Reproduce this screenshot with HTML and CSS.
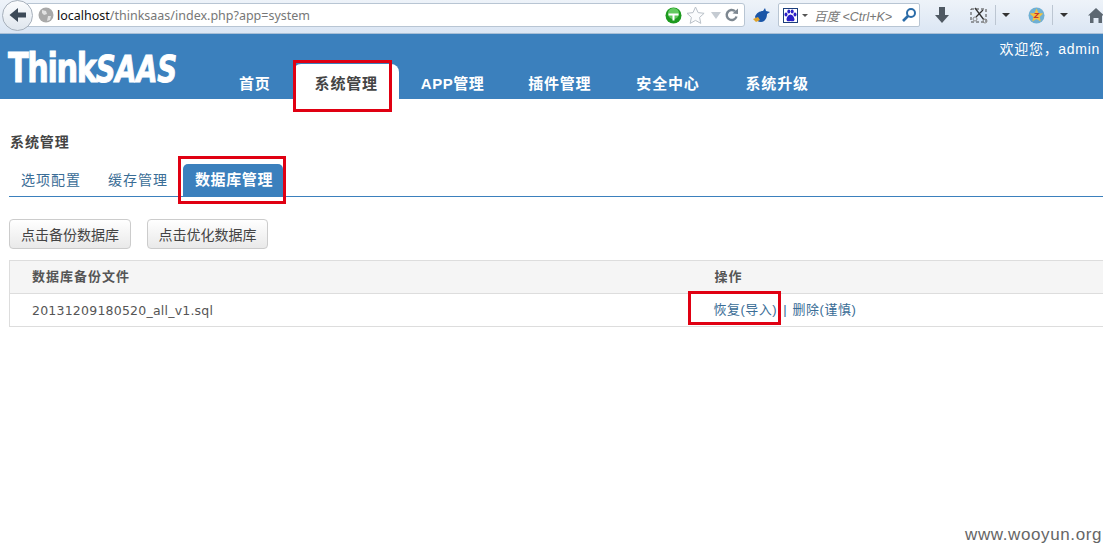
FILE: index.html
```html
<!DOCTYPE html>
<html lang="zh-CN">
<head>
<meta charset="utf-8">
<title>系统管理</title>
<link rel="stylesheet" href="styles.css">
</head>
<body>
<div class="toolbar">
  <div class="back">
    <svg width="22" height="22" viewBox="0 0 22 22"><path d="M19 8.500H11V4L2.500 11l8.500 7v-4.500h8z" fill="#3d4a58"/></svg>
  </div>
  <div class="urlbar">
    <svg class="globe" width="16" height="16" viewBox="0 0 16 16"><circle cx="8" cy="8" r="7.500" fill="#a9a9a9"/><path d="M4 3l4 1 1 3-3 1-2-2zM10 9l3 0-1 4-3 1z" fill="#e2e2e2"/></svg>
    <span class="url"><span class="host">localhost</span>/thinksaas/index.php?app=system</span>
    <svg class="go" width="17" height="17" viewBox="0 0 17 17"><circle cx="8.500" cy="8.500" r="8" fill="#1d9a1f"/><circle cx="8.500" cy="6.500" r="5.500" fill="#62c95e"/><path d="M3.500 6.500h10v2h-4v5h-2v-5h-4z" fill="#fff"/></svg>
    <svg class="star" width="19" height="18" viewBox="0 0 19 18"><path d="M9.500 1l2.600 5.600 6 .7-4.500 4.100 1.200 6-5.300-3-5.300 3 1.200-6L1 7.300l6-.7z" fill="#fbfcfd" stroke="#b9c0c8"/></svg>
    <span class="drop"></span>
    <svg class="reload" width="14" height="14" viewBox="0 0 14 14"><path d="M11.500 8.500A5 5 0 1 1 10 3.200" fill="none" stroke="#7d8790" stroke-width="2.400"/><path d="M7.500 5.500L13 6V0.500z" fill="#7d8790"/></svg>
  </div>
  <svg class="bird" width="18" height="16" viewBox="0 0 18 16"><path d="M2 10c1-4 5-6 8-6l2-3 1 3 4 1-3 2c0 4-2 8-6 8-3 0-5-2-6-5z" fill="#1a56a8"/><path d="M0 12l5-2 2 3-4 2z" fill="#e0a32a"/></svg>
  <div class="search">
    <span class="paw">
      <svg width="13" height="13" viewBox="0 0 13 13"><g fill="#2a1fc8"><ellipse cx="2" cy="5.500" rx="1.500" ry="2"/><ellipse cx="4.800" cy="2.500" rx="1.500" ry="2"/><ellipse cx="8.200" cy="2.500" rx="1.500" ry="2"/><ellipse cx="11" cy="5.500" rx="1.500" ry="2"/><path d="M6.500 5.500c2 0 4 3 4 5s-2 2-4 1.500c-2 .5-4 .5-4-1.500s2-5 4-5z"/></g></svg>
    </span>
    <span class="mini-drop"></span>
    <span class="hint">百度 &lt;Ctrl+K&gt;</span>
    <svg class="lens" width="16" height="16" viewBox="0 0 16 16"><circle cx="10" cy="6" r="4" fill="none" stroke="#2b6ca8" stroke-width="2"/><path d="M7 9l-5 5" stroke="#2b6ca8" stroke-width="2.600"/></svg>
  </div>
  <svg class="download" width="14" height="16" viewBox="0 0 14 16"><path d="M4 0h6v8h4l-7 8-7-8h4z" fill="#4f5963"/></svg>
  <svg class="scissors" width="19" height="17" viewBox="0 0 19 17"><path d="M1 2h15v13H1z" fill="none" stroke="#444" stroke-dasharray="3 2"/><path d="M5 1l9 12M13 3l-7 7" stroke="#333" stroke-width="1.300"/><circle cx="15" cy="14" r="2" fill="none" stroke="#8a8a8a"/><circle cx="5" cy="12" r="2" fill="none" stroke="#8a8a8a"/></svg>
  <span class="sep sep-a"></span>
  <span class="drop-dark da"></span>
  <svg class="medal" width="17" height="17" viewBox="0 0 17 17"><circle cx="8.500" cy="8.500" r="8" fill="#6fb0d4"/><path d="M8.500 1.500l2 4.500 4.800.5-3.600 3.200 1 4.800-4.200-2.500-4.200 2.500 1-4.800L1.700 6.500 6.500 6z" fill="#f2c23f"/><path d="M6.500 6.500h4l-4 4h4" fill="none" stroke="#c8382c" stroke-width="1.100"/></svg>
  <span class="sep sep-b"></span>
  <span class="drop-dark db"></span>
  <svg class="home" width="16" height="15" viewBox="0 0 16 15"><path d="M8 0l8 7.500h-2V15h-3.500v-5h-5v5H2V7.500H0z" fill="#5d6872"/></svg>
</div>

<header class="site-header">
  <div class="logo"><div class="logo-inner"><span class="logo-think">Think</span><span class="logo-saas">SAAS</span></div></div>
  <nav class="nav">
    <a class="nav-item">首页</a>
    <a class="nav-item nav-active">系统管理</a>
    <a class="nav-item nav-app">APP管理</a>
    <a class="nav-item nav-plugin">插件管理</a>
    <a class="nav-item nav-safe">安全中心</a>
    <a class="nav-item">系统升级</a>
  </nav>
  <div class="welcome">欢迎您，admin</div>
</header>

<main class="content">
  <h1 class="title">系统管理</h1>
  <ul class="tabs">
    <li class="tab">选项配置</li>
    <li class="tab">缓存管理</li>
    <li class="tab tab-active">数据库管理</li>
  </ul>
  <div class="actions">
    <button class="btn">点击备份数据库</button>
    <button class="btn">点击优化数据库</button>
  </div>
  <table class="data">
    <tr class="head">
      <th class="col-file"><span class="cell-up">数据库备份文件</span></th>
      <th><span class="cell-up">操作</span></th>
    </tr>
    <tr>
      <td class="col-file">20131209180520_all_v1.sql</td>
      <td><span class="cell-up cell-links"><a class="link">恢复(导入)</a><span class="pipe">|</span><a class="link">删除(谨慎)</a></span></td>
    </tr>
  </table>
</main>

<div class="mark mark-nav"></div>
<div class="mark mark-tab"></div>
<div class="mark mark-restore"></div>
<div class="watermark">www.wooyun.org</div>
</body>
</html>
```
FILE: styles.css
```css
* { box-sizing: border-box; }
html, body { margin: 0; padding: 0; }
body {
  position: relative;
  width: 1103px;
  height: 544px;
  overflow: hidden;
  background: #fff;
  color: #333;
  font-family: "Liberation Sans", "Noto Sans CJK SC", sans-serif;
}

.toolbar {
  display: flex;
  align-items: center;
  height: 34px;
  padding: 0 0 3px 2px;
  background: linear-gradient(#eef3f9, #dbe6f4);
  border-bottom: 1px solid #a9bfd6;
}
.back {
  display: flex;
  align-items: center;
  justify-content: center;
  width: 31px;
  height: 31px;
  flex: none;
  position: relative;
  z-index: 1;
  border: 1px solid #a7b0bb;
  border-radius: 50%;
  background: linear-gradient(#fbfcfd, #dfe6ee);
}
.urlbar {
  display: flex;
  align-items: center;
  width: 718px;
  height: 24px;
  margin-left: -6px;
  padding-left: 11px;
  flex: none;
  background: #fff;
  border: 1px solid #b8c5d3;
  border-radius: 0 3px 3px 0;
}
.globe { flex: none; margin-left: -1px; }
.url {
  margin-left: 3px;
  width: 609px;
  font-family: "Noto Sans", sans-serif;
  font-size: 12.500px;
  color: #777;
  white-space: nowrap;
}
.host { color: #111; }
.go { flex: none; margin-left: -1px; }
.star { flex: none; margin-left: 4px; }
.drop {
  margin-left: 6px;
  border-left: 5px solid transparent;
  border-right: 5px solid transparent;
  border-top: 7px solid #c5cbd2;
}
.reload { margin-left: 4px; flex: none; }
.bird { margin-left: 8px; flex: none; }
.search {
  display: flex;
  align-items: center;
  width: 142px;
  height: 24px;
  margin-left: 7px;
  padding-left: 4px;
  flex: none;
  background: #fff;
  border: 1px solid #b8c5d3;
  border-radius: 2px;
}
.paw {
  display: flex;
  align-items: center;
  justify-content: center;
  width: 15px;
  height: 15px;
  border: 1px solid #1c3f7c;
}
.mini-drop {
  margin-left: 4px;
  border-left: 3px solid transparent;
  border-right: 3px solid transparent;
  border-top: 3px solid #555;
}
.hint {
  width: 87px;
  margin-left: 6px;
  font-size: 12.500px;
  font-style: italic;
  color: #777;
  white-space: nowrap;
}
.lens { flex: none; margin-left: 0; }
.download { margin-left: 15px; flex: none; }
.scissors { margin-left: 21px; flex: none; }
.sep { width: 1px; height: 20px; background: #bcc6d2; flex: none; }
.sep-a { margin-left: 6px; }
.drop-dark {
  flex: none;
  border-left: 4px solid transparent;
  border-right: 4px solid transparent;
  border-top: 4px solid #333;
}
.da { margin-left: 6px; }
.medal { margin-left: 18px; flex: none; }
.sep-b { margin-left: 7px; }
.db { margin-left: 7px; }
.home { margin-left: 20px; flex: none; }

.site-header {
  position: relative;
  display: flex;
  height: 65px;
  background: #3b80bd;
}
.logo {
  width: 217px;
  padding: 12px 0 0 8px;
  flex: none;
}
.logo-inner {
  color: #fff;
  font-family: "DejaVu Sans", sans-serif;
  font-weight: 700;
  font-size: 33px;
  line-height: 45px;
  white-space: nowrap;
  transform: scale(.92, 1.22);
  transform-origin: left center;
  -webkit-text-stroke: .8px #fff;
}
.logo-think { letter-spacing: -1.500px; }
.logo-saas { font-size: 30px; font-style: italic; letter-spacing: -.4px; }
.nav {
  display: flex;
  align-items: flex-end;
}
.nav-item {
  height: 35px;
  padding: 0 22px;
  font-size: 15px;
  letter-spacing: .8px;
  font-weight: 700;
  line-height: 39px;
  color: #fff;
  white-space: nowrap;
}
.nav-active {
  background: #fff;
  color: #444;
  border-radius: 8px 8px 0 0;
  padding-right: 21px;
}
.nav-app { letter-spacing: .5px; }
.nav-plugin { padding-right: 23px; }
.nav-safe { padding-right: 24px; }
.welcome {
  position: absolute;
  right: 3px;
  top: 5px;
  font-size: 14px;
  letter-spacing: .7px;
  line-height: 20px;
  color: #fff;
}

.content { padding: 0 0 0 9px; }
.title {
  margin: 0;
  padding: 33px 0 0 1px;
  font-size: 14px;
  letter-spacing: .9px;
  line-height: 20px;
  font-weight: 700;
  color: #444;
}
.tabs {
  display: flex;
  gap: 4px;
  height: 45px;
  margin: 0 0 22px;
  padding: 12px 0 0 0;
  list-style: none;
  border-bottom: 1px solid #3b80bd;
}
.tab {
  height: 32px;
  padding: 0 12px;
  font-size: 14px;
  letter-spacing: 1px;
  line-height: 33px;
  color: #3a6d96;
}
.tab:first-child { padding-right: 11px; }
.tab-active {
  width: 100px;
  margin-left: -1px;
  padding: 0 0 0 12px;
  background: #3b80bd;
  color: #fff;
  font-size: 15px;
  letter-spacing: .6px;
  line-height: 32px;
  font-weight: 700;
  border-radius: 5px 5px 0 0;
}
.actions { display: flex; gap: 16px; height: 30px; }
.btn {
  height: 30px;
  padding: 0 11px;
  font: inherit;
  font-size: 14px;
  color: #444;
  background: linear-gradient(#fff, #e9e9e9);
  border: 1px solid #ccc;
  border-radius: 4px;
}
.btn + .btn { padding: 0 10.500px; }
.data {
  width: 1094px;
  margin-top: 11px;
  border-collapse: collapse;
  table-layout: fixed;
  font-size: 13px;
  color: #555;
}
.data th, .data td {
  height: 33px;
  padding: 0;
  text-align: left;
  border-top: 1px solid #ddd;
  border-bottom: 1px solid #ddd;
}
.data th {
  font-weight: 700;
  letter-spacing: 1px;
  color: #555;
  background: #f5f5f5;
}
.data .col-file {
  width: 705px;
  padding-left: 22px;
  border-left: 1px solid #ddd;
}
.data td.col-file { font-family: "DejaVu Sans", sans-serif; font-size: 12.500px; letter-spacing: .22px; }
.cell-up { display: block; margin-top: -4px; }
.cell-links { margin-left: -1px; }
.link { color: #3a6d96; letter-spacing: .5px; }
.pipe { color: #3a6d96; margin: 0 6px; }

.mark {
  position: absolute;
  border: 3px solid #e00012;
  pointer-events: none;
}
.mark-nav { left: 293px; top: 60px; width: 99px; height: 52px; }
.mark-tab { left: 178px; top: 156px; width: 108px; height: 48px; }
.mark-restore { left: 688px; top: 291px; width: 93px; height: 34px; }

.watermark {
  position: absolute;
  right: 1px;
  bottom: -1px;
  font-size: 17px;
  letter-spacing: .6px;
  color: #666;
}
```
